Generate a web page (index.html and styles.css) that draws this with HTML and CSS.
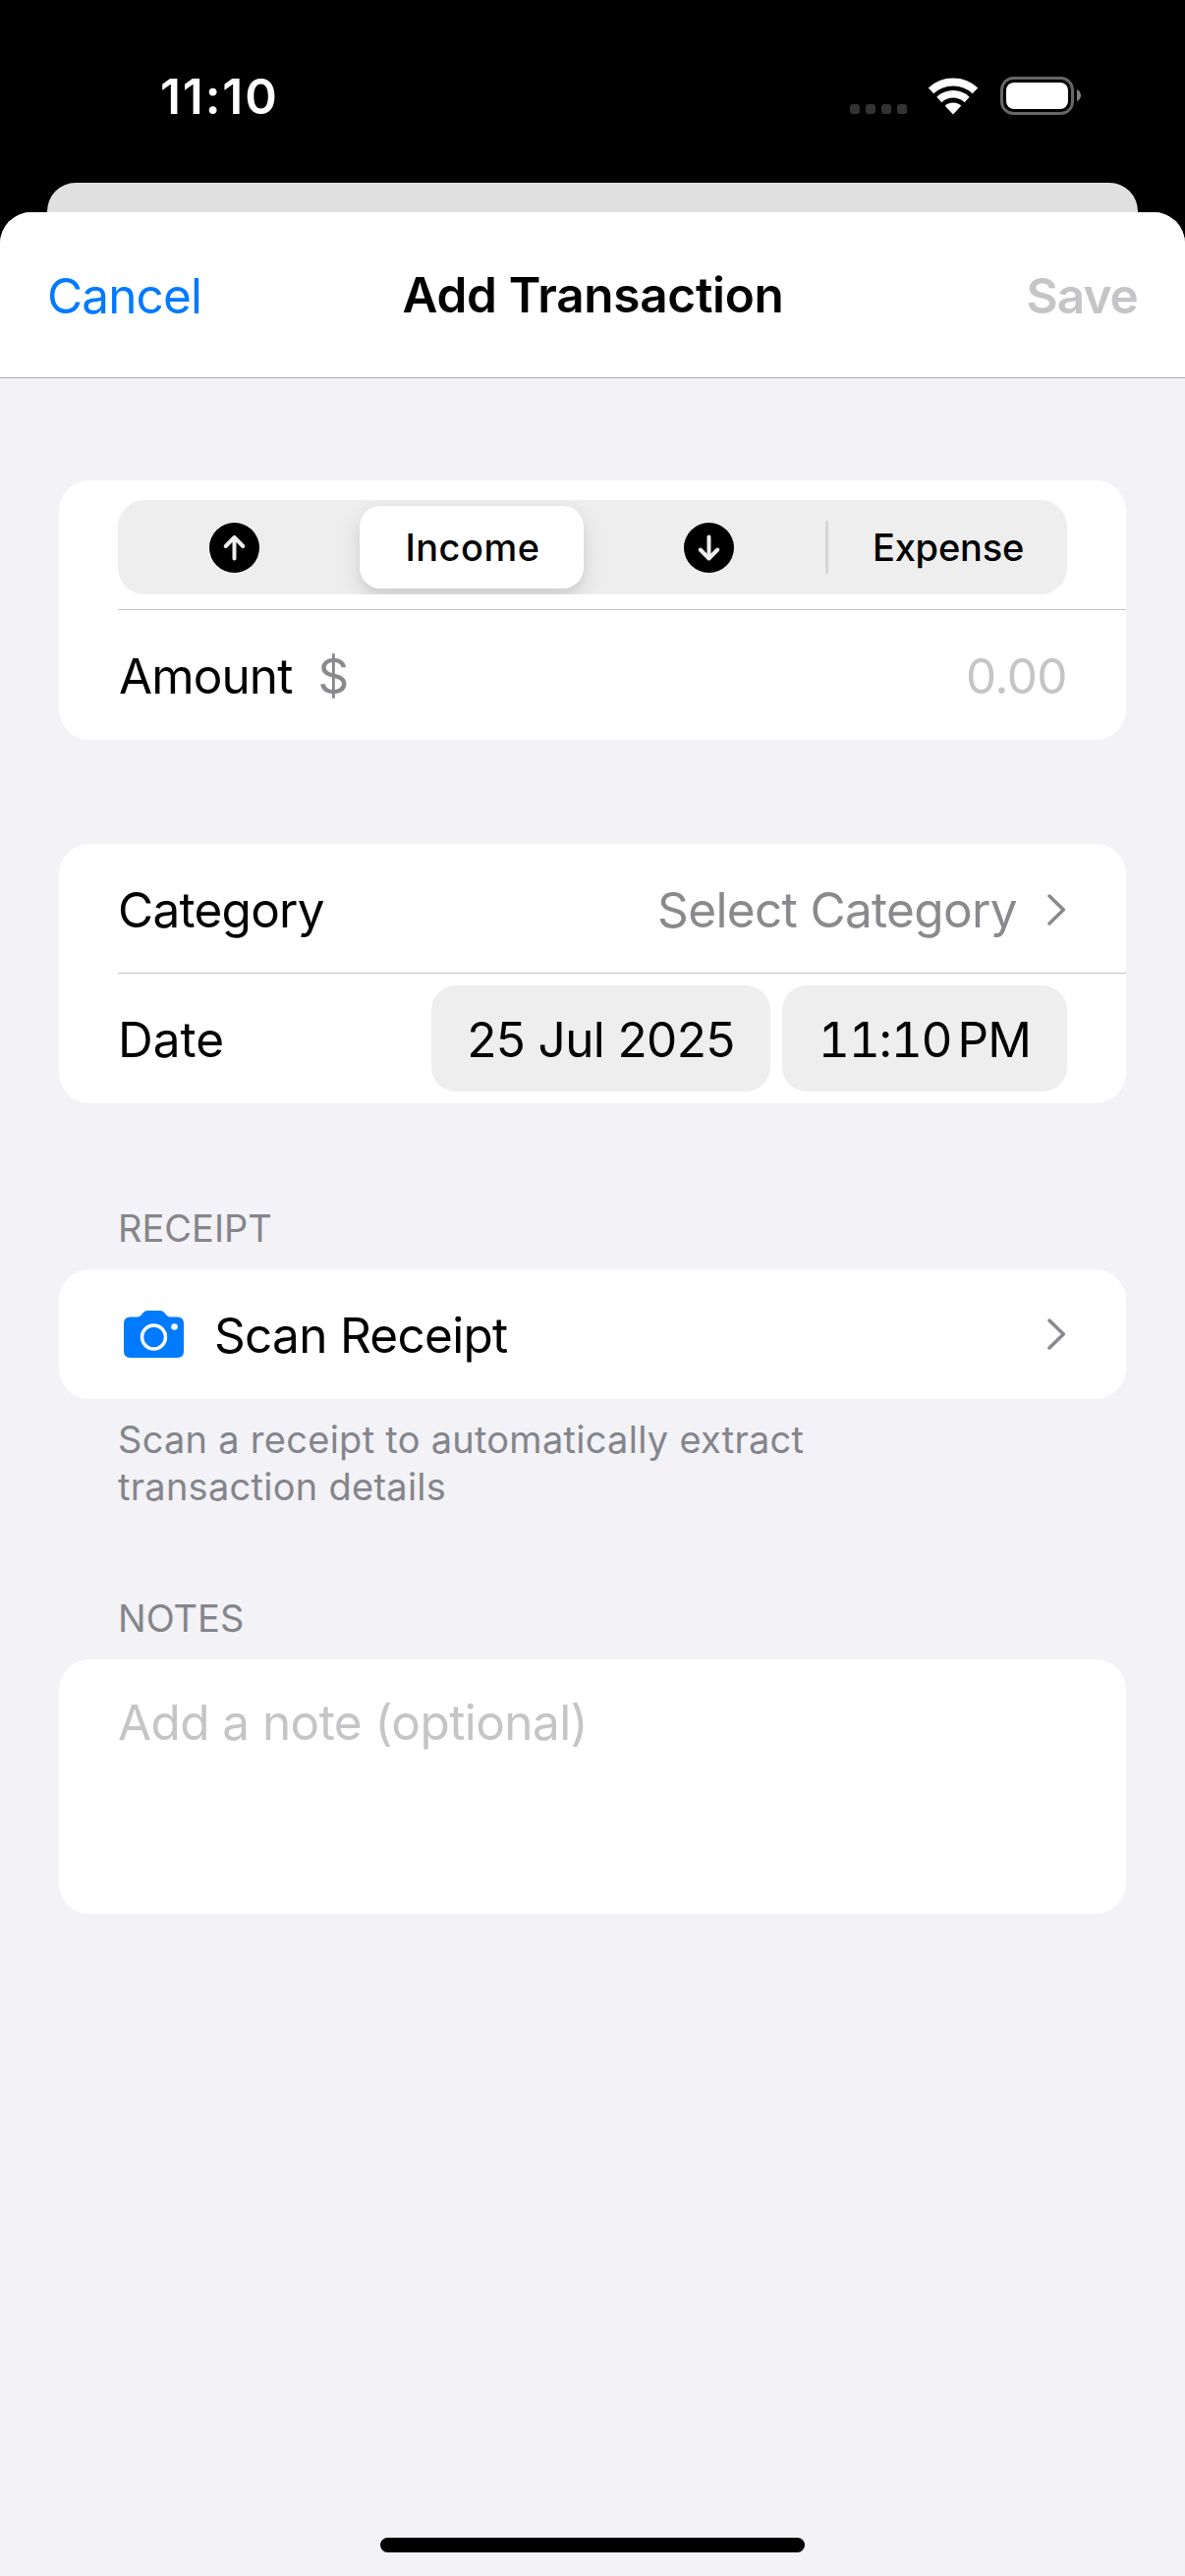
FILE: index.html
```html
<!DOCTYPE html>
<html lang="en">
<head>
<meta charset="utf-8">
<title>Add Transaction</title>
<link rel="stylesheet" href="styles.css">
</head>
<body>
<div class="screen">
  <header class="status-bar">
    <span class="status-time">11:10</span>
    <div class="status-icons">
      <div class="signal"><i></i><i></i><i></i><i></i></div>
      <svg class="wifi" viewBox="0 0 52 38" width="52" height="38" fill="none" stroke="#fff">
        <path d="M3.5 13.4A33 33 0 0 1 48.5 13.4" stroke-width="8"/>
        <path d="M11.9 22.4A20.7 20.7 0 0 1 40.1 22.4" stroke-width="7.5"/>
        <path d="M26 37.5L17.8 28.7A12 12 0 0 1 34.2 28.7Z" fill="#fff" stroke="none"/>
      </svg>
      <svg class="battery" viewBox="0 0 82 39" width="82" height="39">
        <rect x="1.5" y="1.5" width="72" height="36" rx="12" fill="none" stroke="#666" stroke-width="3"/>
        <rect x="6" y="6" width="63" height="27" rx="8" fill="#fff"/>
        <path d="M78 13Q82 15.500 82 19T78 25.500Z" fill="#808080"/>
      </svg>
    </div>
  </header>

  <div class="sheet-behind"></div>

  <main class="sheet">
    <nav class="nav-bar">
      <span class="nav-cancel">Cancel</span>
      <h1 class="nav-title">Add Transaction</h1>
      <span class="nav-save">Save</span>
    </nav>

    <div class="form">
      <section class="card">
        <div class="segment-row">
          <div class="segmented">
            <div class="segment segment-up">
              <svg viewBox="0 0 51 51" width="51" height="51">
                <circle cx="25.500" cy="25.500" r="25.500"/>
                <path d="M25.500 36.500V15M16.700 24L25.500 14.800L34.300 24" fill="none" stroke="#eee" stroke-width="4" stroke-linecap="round" stroke-linejoin="round"/>
              </svg>
            </div>
            <div class="segment segment-selected">Income</div>
            <div class="segment segment-down">
              <svg viewBox="0 0 51 51" width="51" height="51">
                <circle cx="25.500" cy="25.500" r="25.500"/>
                <path d="M25.500 14.500V36M16.700 27.500L25.500 36.500L34.300 27.500" fill="none" stroke="#eee" stroke-width="4" stroke-linecap="round" stroke-linejoin="round"/>
              </svg>
            </div>
            <div class="segment-divider"></div>
            <div class="segment segment-expense">Expense</div>
          </div>
        </div>
        <div class="separator"></div>
        <div class="row">
          <span class="label label-amount">Amount</span>
          <span class="currency">$</span>
          <span class="amount">0.00</span>
        </div>
      </section>

      <section class="card card-details">
        <div class="row row-category">
          <span class="label">Category</span>
          <span class="value">Select Category</span>
          <svg class="chevron" viewBox="0 0 20 32" width="20" height="32"><path d="M2 2L16.300 16L2 30"/></svg>
        </div>
        <div class="separator"></div>
        <div class="row">
          <span class="label label-date">Date</span>
          <div class="pickers">
            <div class="pill pill-date">25 Jul 2025</div>
            <div class="pill pill-time"><span class="clock">11:10</span><span class="meridiem">PM</span></div>
          </div>
        </div>
      </section>

      <h2 class="section-title title-receipt">RECEIPT</h2>
      <section class="card">
        <div class="row">
          <svg class="camera" viewBox="0 0 61 48" width="61" height="48">
            <path d="M6.500 6.500H14Q16 6.500 17.500 4.800L19.800 2Q21.500 0 24 0H37Q39.500 0 41.200 2L43.500 4.800Q45 6.500 47 6.500H54.500Q61 6.500 61 13V41.500Q61 48 54.500 48H6.500Q0 48 0 41.500V13Q0 6.500 6.500 6.500Z" fill="#007aff"/>
            <circle cx="30.500" cy="27" r="12" fill="none" stroke="#fff" stroke-width="3.400"/>
            <circle cx="51.500" cy="16.500" r="3.300" fill="#fff"/>
          </svg>
          <span class="label label-scan">Scan Receipt</span>
          <svg class="chevron" viewBox="0 0 20 32" width="20" height="32"><path d="M2 2L16.300 16L2 30"/></svg>
        </div>
      </section>
      <p class="footnote">Scan a receipt to automatically extract<br>transaction details</p>

      <h2 class="section-title title-notes">NOTES</h2>
      <section class="card notes">
        <span class="placeholder">Add a note (optional)</span>
      </section>
    </div>

    <div class="home-indicator"></div>
  </main>
</div>
</body>
</html>
```
FILE: styles.css
```css
* {
  box-sizing: border-box;
}

body {
  margin: 0;
  background: #000;
  color: #000;
  font-family: Inter, "Liberation Sans", sans-serif;
  font-size: 49.5px;
  line-height: 60px;
}

h1, h2, p {
  margin: 0;
}

svg {
  display: block;
  flex: none;
}

.screen {
  display: flex;
  flex-direction: column;
  width: 1206px;
  height: 2622px;
  background: #000;
  white-space: nowrap;
  overflow: hidden;
}

/* Status bar */
.status-bar {
  flex: none;
  display: flex;
  justify-content: space-between;
  align-items: center;
  height: 186px;
  padding: 9px 106px 0 163px;
}

.status-time {
  color: #fff;
  font-weight: 600;
  letter-spacing: 1.9px;
}

.status-icons {
  display: flex;
  align-items: center;
}

.signal {
  display: flex;
  gap: 6px;
  padding-top: 27px;
}

.signal i {
  width: 10px;
  height: 10px;
  border-radius: 3px;
  background: #333;
}

.wifi {
  margin: 0 22px 0 21px;
}

/* Sheets */
.sheet-behind {
  flex: none;
  height: 30px;
  margin: 0 48px;
  border-radius: 29px 29px 0 0;
  background: #e0e0e0;
}

.sheet {
  flex: 1;
  display: flex;
  flex-direction: column;
  border-radius: 32px 32px 0 0;
  background: #f2f2f7;
  overflow: hidden;
}

.nav-bar {
  flex: none;
  display: grid;
  grid-template-columns: 1fr auto 1fr;
  align-items: center;
  height: 169px;
  padding: 0 48px;
  border-bottom: 1px solid #acacaf;
  background: #fff;
}

.nav-cancel {
  padding-top: 2px;
  color: #007aff;
  letter-spacing: -0.87px;
}

.nav-title {
  padding-left: 1px;
  font-size: 49.5px;
  font-weight: 600;
  letter-spacing: -0.3px;
}

.nav-save {
  padding-top: 2px;
  color: #c5c5c7;
  font-weight: 600;
  letter-spacing: -0.9px;
  text-align: right;
}

/* Form */
.form {
  flex: 1;
  padding: 104px 60px 0;
}

.card {
  border-radius: 31px;
  background: #fff;
  overflow: hidden;
}

.card-details {
  margin-top: 106px;
}

.separator {
  height: 1px;
  margin-left: 60px;
  background: #c5c5c7;
}

.row {
  display: flex;
  align-items: center;
  height: 132px;
  padding: 0 60px;
}

.row-category {
  height: 131px;
}

.label {
  padding-top: 2px;
  letter-spacing: -0.75px;
}

.label-amount {
  margin-left: 1px;
  letter-spacing: -0.9px;
}

.label-date {
  letter-spacing: 0;
}

.label-scan {
  margin: 0 auto 0 31px;
  letter-spacing: -0.72px;
}

.currency {
  margin-left: 26px;
  padding-top: 2px;
  color: #8a8a8e;
}

.amount {
  margin-left: auto;
  padding-top: 2px;
  color: #c5c5c7;
  letter-spacing: -0.6px;
}

.value {
  margin: 0 31px 0 auto;
  padding-top: 2px;
  color: #8a8a8e;
  letter-spacing: -0.65px;
}

.chevron {
  fill: none;
  stroke: #8a8a8e;
  stroke-width: 3.5px;
  stroke-linecap: round;
  stroke-linejoin: round;
}

.row-category .chevron {
  margin-top: 2px;
}

.camera {
  margin-left: 6px;
}

/* Segmented control */
.segment-row {
  padding: 20px 60px 15px;
}

.segmented {
  display: grid;
  grid-template-columns: 240px 240px 240px 3px 243px;
  align-items: center;
  height: 96px;
  border-radius: 27px;
  background: #eee;
  font-size: 38px;
  font-weight: 500;
  overflow: hidden;
}

.segment {
  display: flex;
  align-items: center;
  justify-content: center;
  height: 84px;
}

.segment-up {
  padding-right: 3px;
}

.segment-down {
  padding-left: 3px;
}

.segment-selected {
  margin: 0 6px;
  padding-left: 2px;
  border-radius: 21px;
  background: #fff;
  box-shadow: 0 9px 24px rgba(0, 0, 0, 0.12), 0 6px 6px rgba(0, 0, 0, 0.04);
  letter-spacing: 0.5px;
}

.segment-expense {
  padding-left: 1px;
  letter-spacing: -0.2px;
}

.segment-divider {
  height: 54px;
  border-radius: 2px;
  background: #d5d5d6;
}

/* Date and time pickers */
.pickers {
  display: flex;
  gap: 12px;
  margin-left: auto;
}

.pill {
  display: flex;
  align-items: center;
  justify-content: center;
  height: 108px;
  padding-top: 2px;
  border-radius: 25px;
  background: #eee;
}

.pill-date {
  width: 345px;
  letter-spacing: -0.62px;
}

.pill-time {
  width: 290px;
}

.clock {
  font-variant-numeric: tabular-nums;
  letter-spacing: -1.2px;
}

.meridiem {
  margin-left: 6px;
  letter-spacing: -0.8px;
}

/* Section text */
.section-title,
.footnote {
  padding-left: 60px;
  color: #85858b;
  font-size: 38px;
  font-weight: 400;
  line-height: 48px;
}

.title-receipt {
  margin: 103px 0 18px;
}

.title-notes {
  margin: 86px 0 18px;
}

.footnote {
  margin-top: 17px;
  letter-spacing: 0.27px;
}

.notes {
  height: 259px;
  padding: 34px 60px;
}

.placeholder {
  display: block;
  color: #c5c5c7;
  letter-spacing: -0.58px;
}

.home-indicator {
  flex: none;
  align-self: center;
  width: 432px;
  height: 15px;
  margin-bottom: 24px;
  border-radius: 8px;
  background: #000;
}
```
